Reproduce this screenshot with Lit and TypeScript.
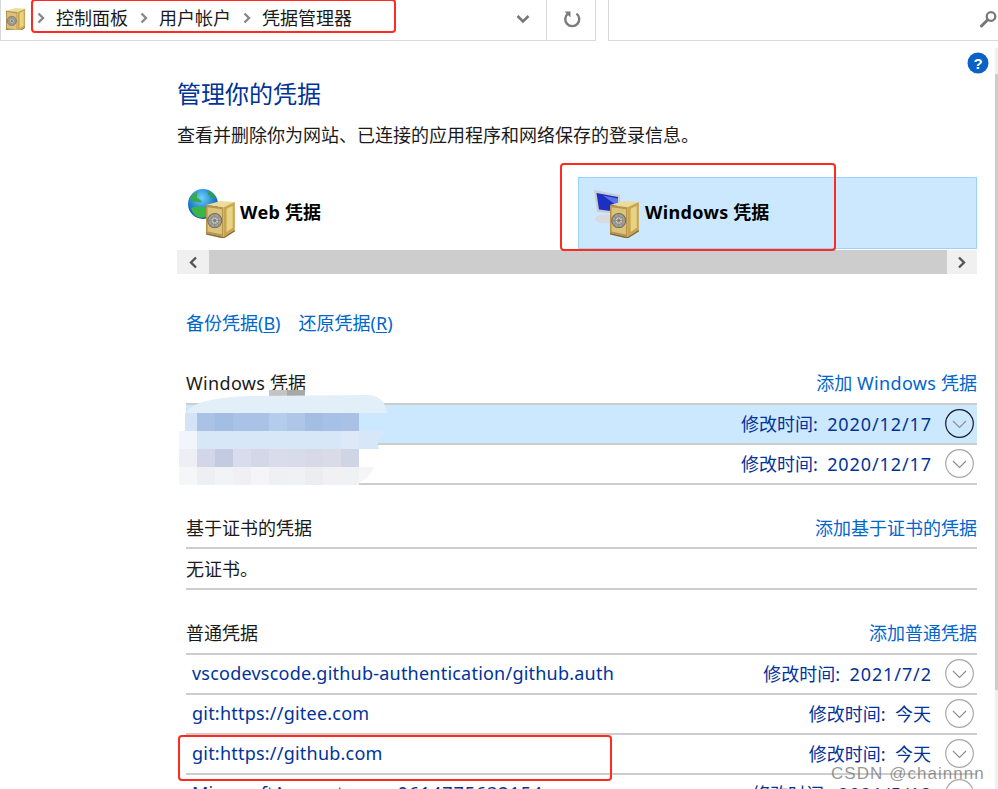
import { LitElement, html, css, svg } from "lit";
import { customElement } from "lit/decorators.js";

const safe = (x: number, y: number, s: number) => svg`
  <g transform="translate(${x} ${y}) scale(${s})">
    <path d="M0 4 L14 0 L28 1 L17 6 Z" fill="#eedb9c"/>
    <path d="M0 4 L17 6 L17 35 L0 31 Z" fill="#b8934a"/>
    <path d="M1.500 6 L15.500 8 L15.500 32.500 L1.500 29.500 Z" fill="#dcc37c"/>
    <path d="M17 6 L28 1 L28 28 L17 35 Z" fill="#c9a550"/>
    <path d="M20 7.500 L26 4.500 L26 26 L20 30 Z" fill="#e8d284"/>
    <path d="M0 31 L17 35 L28 28 L28 29.500 L17 36.500 L0 32.500 Z" fill="#86662a"/>
    <circle cx="8.500" cy="19" r="6.800" fill="#a3a297" stroke="#6f6c62" stroke-width="1"/>
    <circle cx="8.500" cy="19" r="3.800" fill="#d6d5cd" stroke="#85827a" stroke-width=".9"/>
    <circle cx="8.500" cy="19" r="1.500" fill="#77746a"/>
    <path d="M8.500 12.500v13M2 19h13M4 14.500l9 9M13 14.500l-9 9" stroke="#85827a" stroke-width=".7"/>
  </g>`;

const mosaic = [
  ["#a9c2e6", "#a4bee3", "#a9c2e6", "#a9c2e6", "#b5cdec", "#afc6e8", "#a4bee3", "#a7c0e5", "#a9c1e5"],
  ["#d7e7f8", "#d7e7f8", "#d7e7f8", "#d7e7f8", "#d7e7f8", "#d7e7f8", "#d7e7f8", "#d7e7f8", "#dbe9f8"],
  ["#d2d6e8", "#c4cadf", "#d9dcec", "#d4d7e8", "#d9dcea", "#d8dbe9", "#d7d9e7", "#d9dbe8", "#d0d5e6"],
  ["#eeeff3", "#f2f3f6", "#f0f0f4", "#f5f5f7", "#eff0f3", "#f0f1f4", "#ecedf1", "#f1f1f4", "#f0f1f5"],
];

@customElement("app-root")
export class AppRoot extends LitElement {
  static styles = css`
    :host {
      display: block;
      position: relative;
      width: 998px;
      height: 789px;
      overflow: hidden;
      background: #fff;
      font-family: "Segoe UI", "Noto Sans", "Noto Sans CJK SC", sans-serif;
      font-size: 18px;
      color: #1a1a1a;
    }
    a { color: #0066cc; text-decoration: none; }
    u { text-underline-offset: 2px; }
    .lat { letter-spacing: .35px; }
    .num { letter-spacing: .9px; margin-right: -.9px; }
    .top { display: flex; height: 41px; }
    .addr {
      width: 596px; display: flex; align-items: center; box-sizing: border-box;
      border-left: 1px solid #d9d9d9; border-right: 1px solid #d9d9d9; border-bottom: 1px solid #d9d9d9;
    }
    .addr-icon { width: 20px; height: 22px; margin: 0 0 3px 5px; flex: none; }
    .crumbs { display: flex; align-items: center; flex: 1; margin-left: 11px; height: 32px; margin-top: -5px; line-height: 32px; color: #1a1a1a; }
    .crumb { display: flex; align-items: center; }
    .crumb svg { width: 8px; height: 12px; margin-right: 11px; }
    .crumb + .crumb { margin-left: 12px; }
    .drop { width: 50px; display: flex; justify-content: center; margin-right: -1px; margin-top: -3px; padding-left: 1px; box-sizing: border-box; }
    .refresh { width: 49px; height: 100%; border-left: 1px solid #d9d9d9; display: flex; align-items: center; justify-content: center; box-sizing: border-box; padding: 0 0 3px 1px; }
    .search { margin-left: 12px; flex: 1; display: flex; justify-content: flex-end; align-items: center; border-left: 1px solid #d9d9d9; border-bottom: 1px solid #d9d9d9; padding: 0 1px 3px 0; }
    .body { display: flex; }
    .main { width: 800px; margin-left: 177px; }
    .help { position: absolute; left: 967px; top: 52px; }
    .track { margin: 7px 0 0 18px; width: 3px; height: 741px; background: #f0f0f0; padding-top: 26px; box-sizing: border-box; }
    .track-thumb { height: 616px; background: #cdcdcd; }
    h1 { margin: 0; padding-top: 35px; font-weight: 400; font-size: 24px; line-height: 36px; color: #003399; }
    .intro { margin: 0; padding-top: 7px; line-height: 32px; height: 32px; color: #1a1a1a; }
    .tabs { display: flex; height: 72px; margin-top: 26px; }
    .tab { display: flex; align-items: center; font-weight: 700; color: #000; box-sizing: border-box; padding-bottom: 1px; }
    .tab svg { width: 50px; height: 50px; flex: none; }
    .tab-web { width: 401px; padding-left: 10px; gap: 3px; }
    .tab-win { flex: 1; padding-left: 13px; gap: 3px; background: #cce8ff; border: 1px solid #99d1ff; }
    .tab-label { position: relative; top: -2px; }
    .hbar { display: flex; height: 24px; margin-top: 1px; background: #cdcdcd; }
    .hbtn { width: 32px; background: #f0f0f0; display: flex; align-items: center; justify-content: center; }
    .hbtn + .hbtn { margin-left: auto; width: 30px; }
    .content { padding-left: 9px; }
    .tools { display: flex; gap: 18px; height: 32px; line-height: 32px; margin-top: 33px; }
    .head { display: flex; justify-content: space-between; align-items: center; height: 32px; line-height: 32px; border-bottom: 2px solid #cdcdcd; padding-bottom: 4px; }
    .head.first { margin-top: 28px; }
    .head.gap { margin-top: 27px; padding-bottom: 3px; }
    .head.gap2 { margin-top: 27px; }
    .head > span { color: #1a1a1a; }
    .row { display: flex; align-items: center; height: 36px; border-bottom: 2px solid #cdcdcd; padding: 0 3px 2px 6px; color: #003399; }
    .row.sel { background: #cce8ff; }
    .row .name { flex: 1; white-space: nowrap; letter-spacing: .22px; }
    .row .when { white-space: pre; margin-right: 14px; }
    .plain { height: 38px; line-height: 38px; padding-top: 1px; border-bottom: 2px solid #cdcdcd; color: #1a1a1a; }
    .exp { width: 29px; height: 29px; flex: none; display: block; }
    .mark { position: absolute; border: 2px solid #ff2a20; border-radius: 4px; box-sizing: border-box; pointer-events: none; }
    .m1 { left: 31px; top: -1px; width: 365px; height: 34px; }
    .m2 { left: 560px; top: 163px; width: 276px; height: 88px; }
    .m3 { left: 178px; top: 735px; width: 434px; height: 46px; }
    .blur { position: absolute; left: 179px; top: 388px; width: 210px; height: 100px; }
    .wm { position: absolute; left: 831px; top: 762px; font: 17px/24px "Liberation Sans", sans-serif; letter-spacing: 1.05px; color: rgba(110,110,110,.72); white-space: nowrap; }
  `;

  private chevBtn(active = false) {
    const c = active ? "#1a1a1a" : "#a8a8a8";
    return html`<svg class="exp" viewBox="0 0 29 29"><circle cx="14.5" cy="14.5" r="13.8" fill="none" stroke=${c} stroke-width="1.2"/><path d="M8 12l6.5 6.5L21 12" fill="none" stroke="#8c8c8c" stroke-width="1.1"/></svg>`;
  }

  private row(name: unknown, when: unknown, active = false, sel = false) {
    return html`<div class="row ${sel ? "sel" : ""}"><span class="name">${name}</span><span class="when">修改时间:  ${when}</span>${this.chevBtn(active)}</div>`;
  }

  private crumb(t: string) {
    return html`<span class="crumb"><svg viewBox="0 0 8 12"><path d="M1.5 1.5L6 6l-4.500 4.500" fill="none" stroke="#888" stroke-width="2.400"/></svg>${t}</span>`;
  }

  render() {
    const num = (s: string) => html`<span class="num">${s}</span>`;
    return html`
      <div class="top">
        <div class="addr">
          <svg class="addr-icon" viewBox="0 0 20 22">${safe(0, 0, 0.68)}</svg>
          <div class="crumbs">${this.crumb("控制面板")}${this.crumb("用户帐户")}${this.crumb("凭据管理器")}</div>
          <div class="drop"><svg width="14" height="10" viewBox="0 0 14 10"><path d="M1.500 2L7 7.500 12.500 2" fill="none" stroke="#777" stroke-width="2.600"/></svg></div>
          <div class="refresh"><svg width="18" height="18" viewBox="0 0 18 18"><path d="M5 3.600A7 7 0 1 0 13.500 3.600" fill="none" stroke="#7a7a7a" stroke-width="2.400"/><path d="M1.500 1.500h6v6z" fill="#7a7a7a"/></svg></div>
        </div>
        <div class="search"><svg width="18" height="18" viewBox="0 0 18 18"><circle cx="12" cy="6.500" r="4.300" fill="none" stroke="#777" stroke-width="2.300"/><path d="M8.500 10L2.500 16" stroke="#777" stroke-width="3" stroke-linecap="round"/></svg></div>
      </div>
      <div class="body">
        <div class="main">
          <h1>管理你的凭据</h1>
          <p class="intro">查看并删除你为网站、已连接的应用程序和网络保存的登录信息。</p>
          <div class="tabs">
            <div class="tab tab-web">
              <svg viewBox="0 0 50 50">
                <defs><radialGradient id="g" cx=".45" cy=".3" r=".8"><stop offset="0" stop-color="#6fd3f7"/><stop offset=".55" stop-color="#1b7cd0"/><stop offset="1" stop-color="#123d86"/></radialGradient></defs>
                <circle cx="16" cy="16" r="15" fill="url(#g)"/>
                <path d="M3 10c2-3 4-5 7-6 1 2-1 4 0 6 2 1 4 2 5 4-3 1-6-1-8 0-2-1-3-2-4-4z" fill="#39a84a"/>
                <path d="M4 20c5-2 12-2 16 1 2 2 1 5-1 8-3 1-6 1-9 0-3-2-5-5-6-9z" fill="#39b54a"/>
                <path d="M20 3c4 1 7 3 9 7-3 1-7 0-9-7z" fill="#2f9c52"/>
                ${safe(19, 13, 1.03)}
              </svg>
              <span class="tab-label"><span class="lat">Web</span> 凭据</span>
            </div>
            <div class="tab tab-win">
              <svg viewBox="0 0 50 50">
                <path d="M2 2L28 7V26L5 24z" fill="#c9ccd2"/>
                <path d="M4.500 5L26 9V24L7 21.500z" fill="#1c2fc0"/>
                <path d="M11 7.500l15 3v8z" fill="#5a73e8"/>
                <ellipse cx="13" cy="31" rx="10" ry="4.500" fill="#d8dadd"/>
                ${safe(18, 13, 1.03)}
              </svg>
              <span class="tab-label"><span class="lat">Windows</span> 凭据</span>
            </div>
          </div>
          <div class="hbar">
            <div class="hbtn"><svg width="10" height="13" viewBox="0 0 10 13"><path d="M8 1.500L3 6.500l5 5" fill="none" stroke="#555" stroke-width="2.400"/></svg></div>
            <div class="hbtn"><svg width="10" height="13" viewBox="0 0 10 13"><path d="M2 1.500l5 5-5 5" fill="none" stroke="#555" stroke-width="2.400"/></svg></div>
          </div>
          <div class="content">
            <div class="tools"><a>备份凭据(<u>B</u>)</a><a>还原凭据(<u>R</u>)</a></div>
            <div class="head first"><span><span class="lat">Windows</span> 凭据</span><a>添加 <span class="lat">Windows</span> 凭据</a></div>
            ${this.row("", num("2020/12/17"), true, true)}
            ${this.row("", num("2020/12/17"))}
            <div class="head gap"><span>基于证书的凭据</span><a>添加基于证书的凭据</a></div>
            <div class="plain">无证书。</div>
            <div class="head gap2"><span>普通凭据</span><a>添加普通凭据</a></div>
            ${this.row("vscodevscode.github-authentication/github.auth", num("2021/7/2"))}
            ${this.row("git:https://gitee.com", "今天")}
            ${this.row("git:https://github.com", "今天")}
            ${this.row(html`MicrosoftAccount:user=<span class="num">0614775632154</span>`, num("2021/5/13"))}
          </div>
        </div>
        <div class="track"><div class="track-thumb"></div></div>
      </div>
      <svg class="help" width="22" height="22" viewBox="0 0 22 22"><circle cx="11" cy="11" r="10.500" fill="#0a62c4"/><text x="11" y="16.500" text-anchor="middle" font-family="Liberation Sans" font-size="15" font-weight="700" fill="#fff">?</text></svg>
      <svg class="blur" viewBox="0 0 210 100">
        <rect x="90" y="2" width="18" height="6" fill="#c4c4c4"/>
        <rect x="108" y="2" width="18" height="6" fill="#a8a8a8"/>
        <path d="M8 25C10 14 40 9 70 8L190 7C202 8 207 16 208 25z" fill="#e2eef8"/>
        <rect x="6" y="25" width="12" height="18" fill="#d4e3f6"/>
        <path d="M0 43L18 43L18 61L0 61z" fill="#f2f5fb"/>
        <path d="M18 43H207L198 52 200 61H18z" fill="#d7e7f8"/>
        <rect x="0" y="61" width="18" height="18" fill="#eeeff4"/>
        <rect x="0" y="79" width="18" height="18" fill="#f5f6f8"/>
        <path d="M180 79H195C192 88 185 95 170 97H180z" fill="#f5f5f7"/>
        ${mosaic.map((r, j) => r.map((c, i) => svg`<rect x=${18 + i * 18} y=${25 + j * 18} width="18" height="18" fill=${c}/>`))}
      </svg>
      <div class="mark m1"></div>
      <div class="mark m2"></div>
      <div class="mark m3"></div>
      <div class="wm">CSDN @chainnnn</div>
    `;
  }
}
